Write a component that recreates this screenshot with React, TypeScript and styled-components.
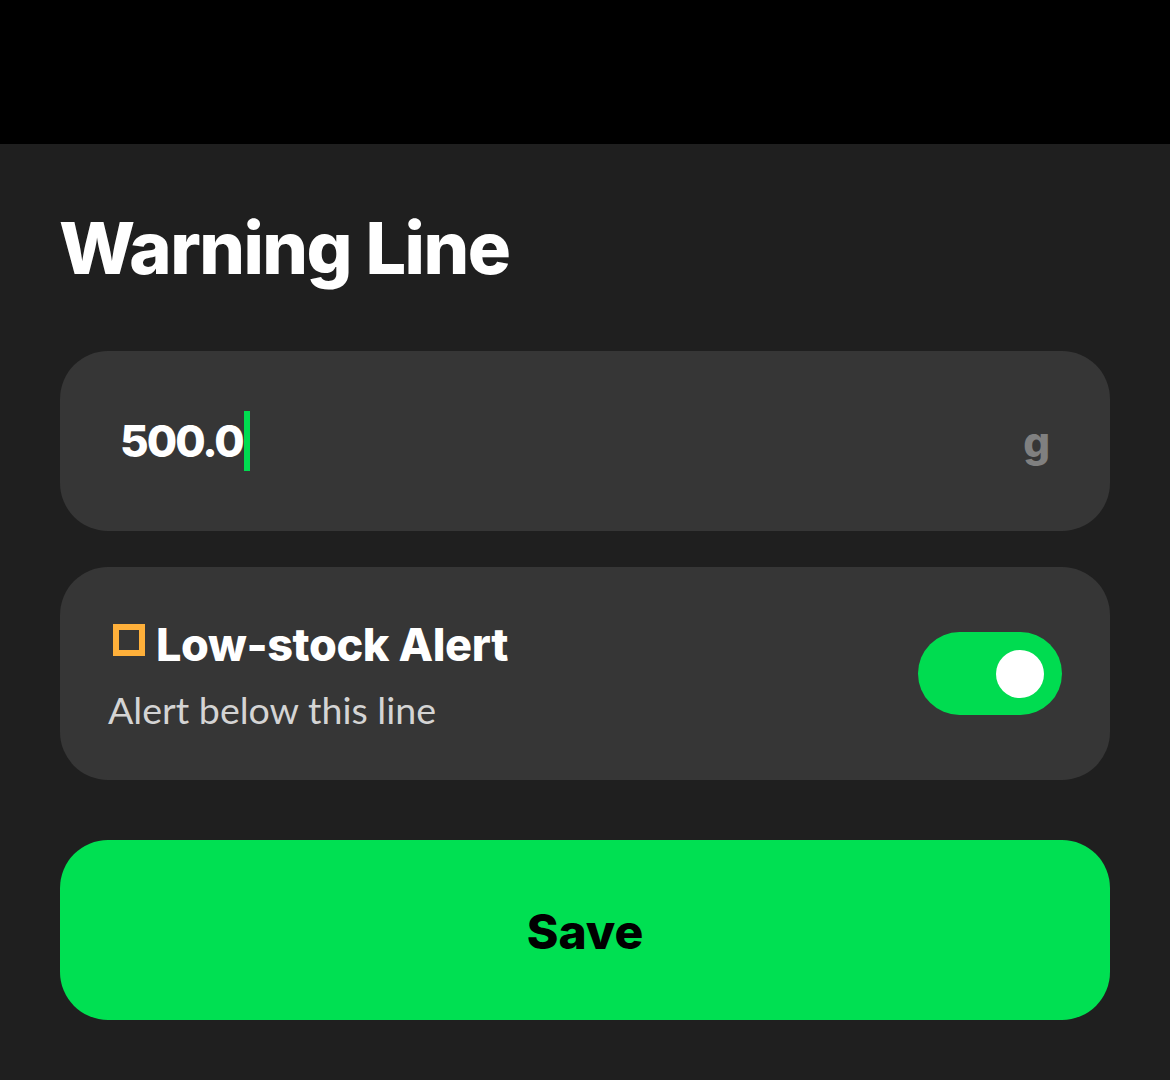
import React from "react";
import styled, { createGlobalStyle } from "styled-components";

const Global = createGlobalStyle`
  html, body { margin: 0; padding: 0; background: #000; }
  * { box-sizing: border-box; }
`;
const Page = styled.div`
  width: 1170px; height: 1080px; padding-top: 144px; background: #000;
  font-family: "Inter", "Liberation Sans", sans-serif;
`;
const Sheet = styled.div`
  height: 936px; background: #1f1f1f; padding: 0 60px;
  display: flex; flex-direction: column;
`;
const Title = styled.h1`
  margin: 60px 0 0 -1px; height: 91px; font-size: 72px; line-height: 87px; font-weight: 800; color: #fff; letter-spacing: -1.5px;
`;
const InputCard = styled.div`
  margin-top: 56px; height: 180px; border-radius: 48px; background: #363636;
  display: flex; align-items: center; justify-content: space-between; padding: 0 60px;
`;
const Value = styled.div`
  display: flex; align-items: center; font-size: 44px; font-weight: 800; color: #fff; letter-spacing: -2px;
`;
const Caret = styled.span`
  width: 6px; height: 60px; background: #00dc50; margin-left: 1px;
`;
const Unit = styled.span`
  font-size: 42px; font-weight: 800; color: #808080;
`;
const AlertCard = styled.div`
  margin-top: 36px; height: 213px; border-radius: 48px; background: #363636;
  display: flex; align-items: center; justify-content: space-between; padding: 0 48px;
`;
const AlertText = styled.div`display: flex; flex-direction: column; gap: 15px; padding-top: 3px;`;
const AlertTitle = styled.div`
  display: flex; align-items: center; gap: 11px; font-size: 45px; line-height: 54px; font-weight: 800; color: #fff; letter-spacing: -0.4px;
`;
const Sub = styled.div`font-family: "Lato", sans-serif; font-size: 37.6px; line-height: 46px; color: #d4d4d4;`;
const Square = styled.span`
  width: 32px; height: 32px; border: 6px solid #ffb03a; margin-left: 5px; margin-top: -10px;
`;
const Toggle = styled.div`
  width: 144px; height: 83px; border-radius: 42px; background: #00dc50;
  display: flex; align-items: center; justify-content: flex-end; padding-right: 18px;
`;
const Knob = styled.span`width: 48px; height: 48px; border-radius: 50%; background: #fff;`;
const Save = styled.button`
  margin-top: 60px; height: 180px; border: 0; border-radius: 48px; background: #00e052; padding: 2px 0 0;
  font: 800 48px "Inter", sans-serif; color: #000;
`;

export default function App() {
  return (
    <Page>
      <Global />
      <Sheet>
        <Title>Warning Line</Title>
        <InputCard>
          <Value>500.0<Caret /></Value>
          <Unit>g</Unit>
        </InputCard>
        <AlertCard>
          <AlertText>
            <AlertTitle><Square />Low-stock Alert</AlertTitle>
            <Sub>Alert below this line</Sub>
          </AlertText>
          <Toggle><Knob /></Toggle>
        </AlertCard>
        <Save>Save</Save>
      </Sheet>
    </Page>
  );
}
